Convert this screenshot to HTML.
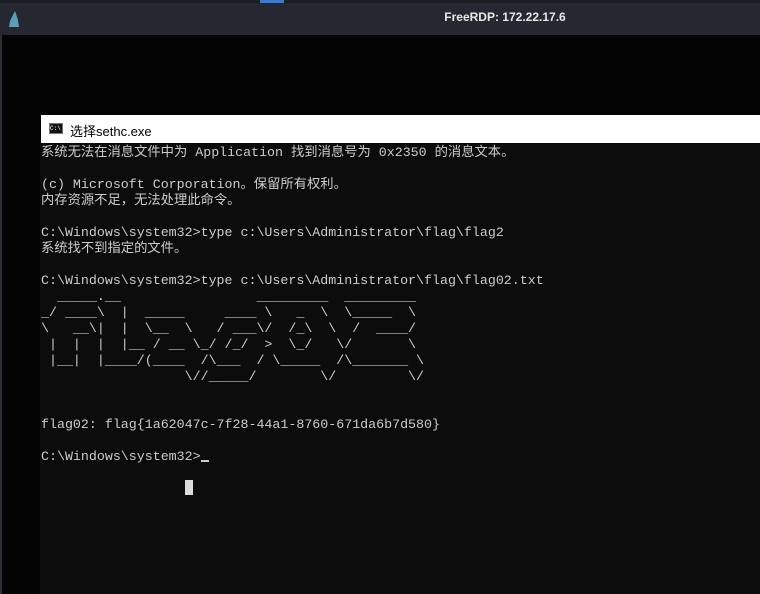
<!DOCTYPE html>
<html><head><meta charset="utf-8"><style>
html,body{margin:0;padding:0;width:760px;height:594px;overflow:hidden;background:#040404;}
.top{position:absolute;left:0;top:0;width:760px;height:35px;background:#252830;}
.strip{position:absolute;left:0;top:0;width:760px;height:3px;background:#1b1d22;}
.title{position:absolute;left:0;width:760px;top:10px;text-align:center;color:#e8e8e8;font:bold 12px "Liberation Sans",sans-serif;padding-left:250px;box-sizing:border-box;}
.lb{position:absolute;left:0;top:35px;width:2px;height:559px;background:#2a2d33;}
.hdr{position:absolute;left:41px;top:115px;width:719px;height:28px;background:#fff;}
.hdr span{position:absolute;left:29px;top:6px;font:13px "Liberation Sans","Noto Sans CJK SC",sans-serif;color:#000;}
.ico{position:absolute;left:8px;top:8px;width:14px;height:11px;background:#111;border:1px solid #777;box-sizing:border-box;color:#fff;font:6px "Liberation Mono",monospace;line-height:9px;}
.con{position:absolute;left:40px;top:143px;width:720px;height:451px;background:#0c0c0c;}
pre{position:absolute;left:41px;top:145px;margin:0;font:13.3px/16px "Liberation Mono","Noto Sans CJK SC",monospace;color:#cccccc;letter-spacing:0.0px;}
.cur1{position:absolute;left:201px;top:460px;width:8px;height:2px;background:#ccc;}
.cur2{position:absolute;left:185px;top:480px;width:8px;height:15px;background:#ddd;}
</style></head><body>
<div class="top"></div><div class="strip"></div>
<div style="position:absolute;left:260px;top:0;width:24px;height:3px;background:#3a7bd5"></div>
<svg style="position:absolute;left:7px;top:11px" width="14" height="17"><path d="M8 0 L3 10 L2 16 L12 16 L11 9 Z" fill="#5aa0b8"/></svg>
<div class="title">FreeRDP: 172.22.17.6</div>
<div class="lb"></div>
<div class="hdr"><div class="ico">C:\</div><span>选择sethc.exe</span></div>
<div class="con"></div>
<pre>系统无法在消息文件中为 Application 找到消息号为 0x2350 的消息文本。

(c) Microsoft Corporation。保留所有权利。
内存资源不足，无法处理此命令。

C:\Windows\system32>type c:\Users\Administrator\flag\flag2
系统找不到指定的文件。

C:\Windows\system32>type c:\Users\Administrator\flag\flag02.txt
  _____.__                 _________  _________
_/ ____\  |  _____     ____ \   _  \  \_____  \
\   __\|  |  \__  \   / ___\/  /_\  \  /  ____/
 |  |  |  |__ / __ \_/ /_/  >  \_/   \/       \
 |__|  |____/(____  /\___  / \_____  /\_______ \
                  \//_____/        \/         \/


flag02: flag{1a62047c-7f28-44a1-8760-671da6b7d580}

C:\Windows\system32></pre>
<div class="cur1"></div><div class="cur2"></div>
</body></html>
